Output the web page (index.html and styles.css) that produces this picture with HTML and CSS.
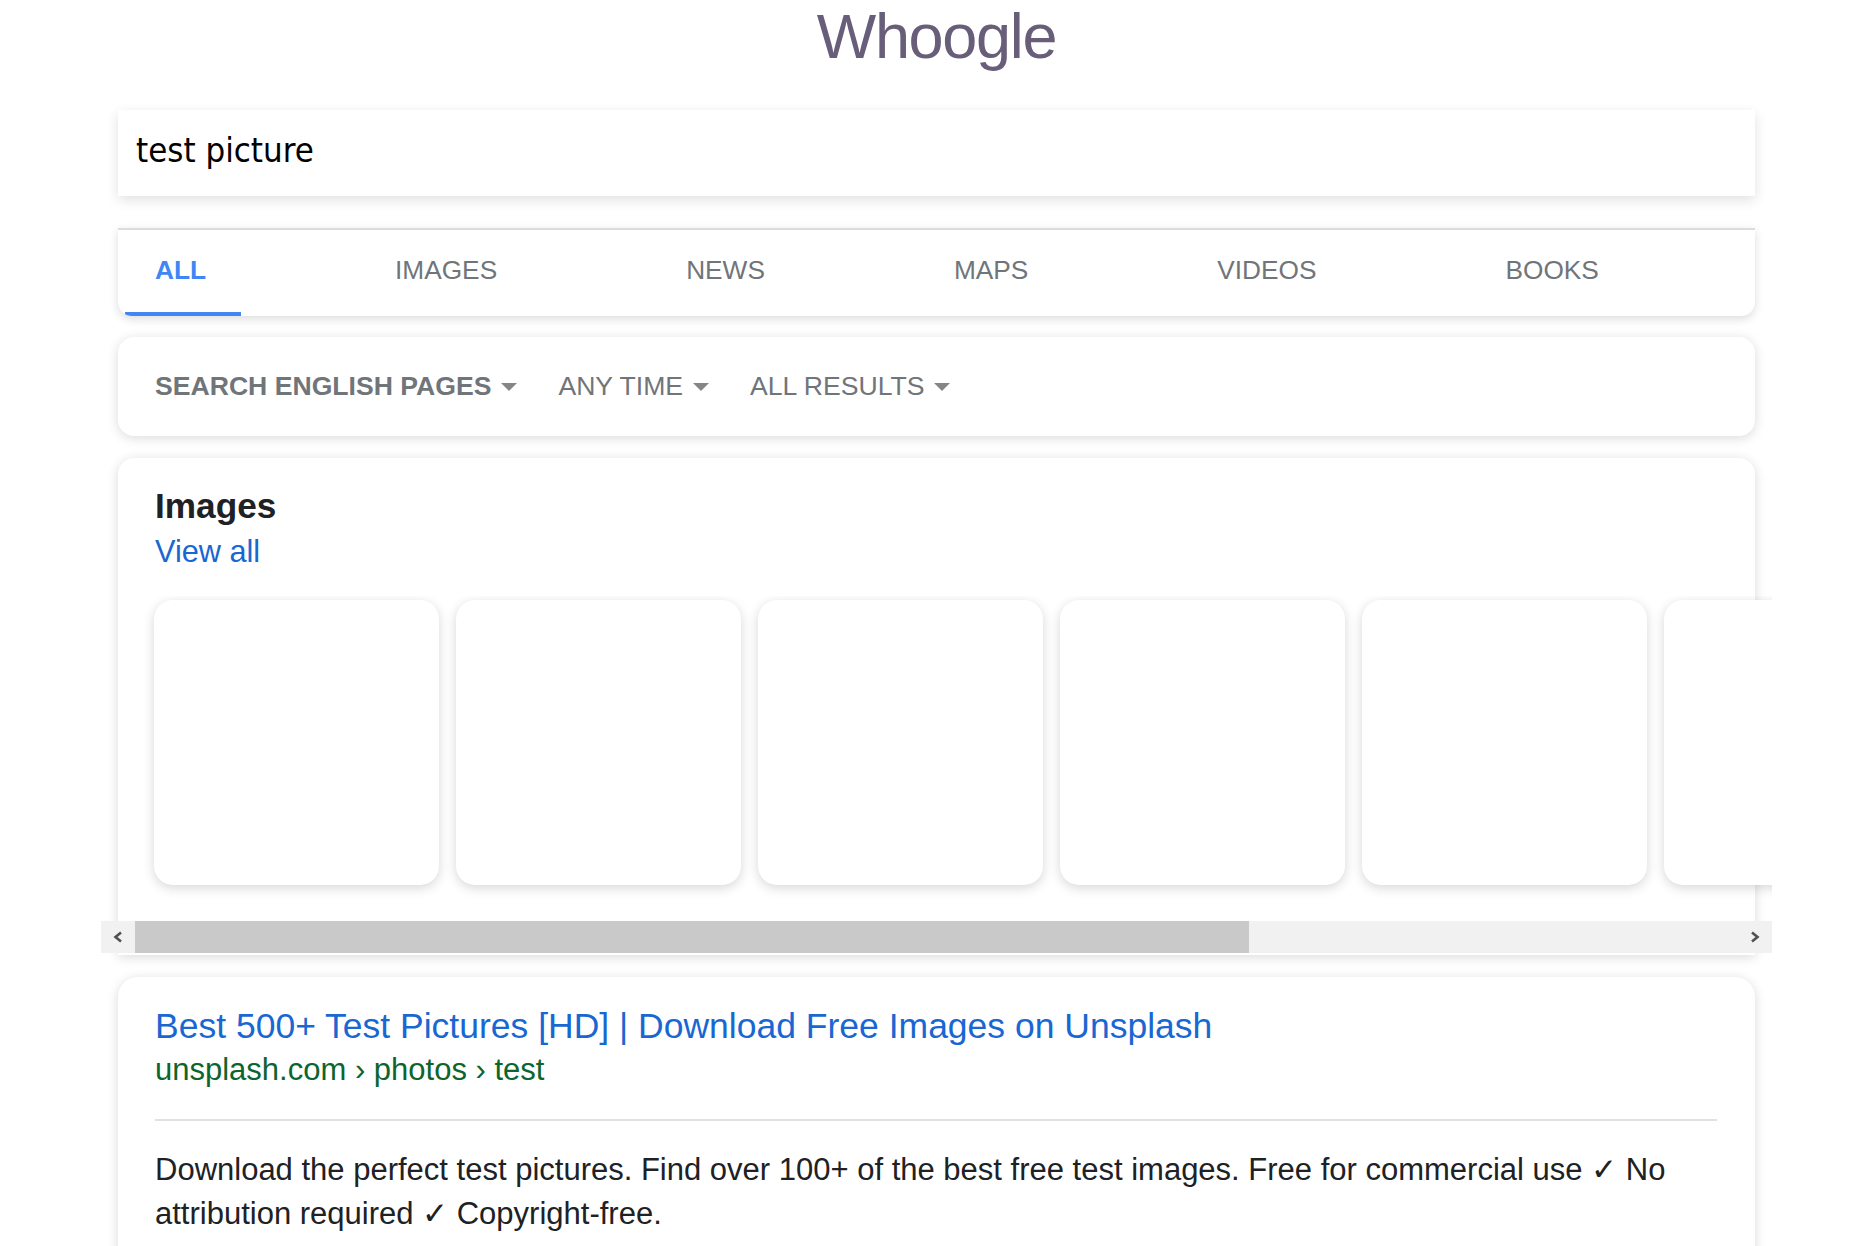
FILE: index.html
```html
<!DOCTYPE html>
<html lang="en">
<head>
<meta charset="utf-8">
<title>test picture - Whoogle Search</title>
<link rel="stylesheet" href="styles.css">
</head>
<body>
<div class="page">
  <header class="logo">Whoogle</header>

  <div class="search-bar">test picture</div>

  <nav class="tabs">
    <a class="tab active">ALL</a>
    <a class="tab first-after">IMAGES</a>
    <a class="tab">NEWS</a>
    <a class="tab">MAPS</a>
    <a class="tab">VIDEOS</a>
    <a class="tab">BOOKS</a>
  </nav>

  <div class="card filters">
    <div class="filter strong"><span>SEARCH ENGLISH PAGES</span><span class="caret"></span></div>
    <div class="filter"><span>ANY TIME</span><span class="caret"></span></div>
    <div class="filter"><span>ALL RESULTS</span><span class="caret"></span></div>
  </div>

  <section class="card images-card">
    <h2 class="images-title">Images</h2>
    <a class="view-all">View all</a>
    <div class="scroller">
      <div class="strip">
        <div class="thumb"></div>
        <div class="thumb"></div>
        <div class="thumb"></div>
        <div class="thumb"></div>
        <div class="thumb"></div>
        <div class="thumb"></div>
        <div class="thumb"></div>
      </div>
      <div class="scrollbar">
        <div class="sb-btn">
          <svg width="10" height="12" viewBox="0 0 10 12"><polyline points="8,1.5 2.5,6 8,10.5" fill="none" stroke="#505050" stroke-width="2.6"/></svg>
        </div>
        <div class="sb-track"><div class="sb-thumb"></div></div>
        <div class="sb-btn">
          <svg width="10" height="12" viewBox="0 0 10 12"><polyline points="2,1.5 7.5,6 2,10.5" fill="none" stroke="#505050" stroke-width="2.6"/></svg>
        </div>
      </div>
    </div>
  </section>

  <section class="card result">
    <a class="result-title">Best 500+ Test Pictures [HD] | Download Free Images on Unsplash</a>
    <div class="result-url">unsplash.com › photos › test</div>
    <div class="divider"></div>
    <p class="snippet">Download the perfect test pictures. Find over 100+ of the best free test images. Free for commercial use ✓ No attribution required ✓ Copyright-free.</p>
  </section>
</div>
</body>
</html>
```

FILE: styles.css
```css
html {
  overflow: hidden;
  background: #ffffff;
}

body {
  margin: 0;
  font-family: "Liberation Sans", Arial, sans-serif;
  color: #202124;
  background: #ffffff;
}

.page {
  width: 1637px;
  margin-left: 118px;
  display: flex;
  flex-direction: column;
}

.logo {
  height: 72px;
  font-size: 63px;
  line-height: 72px;
  letter-spacing: -1.3px;
  text-align: center;
  color: #685e79;
}

.search-bar {
  margin-top: 38px;
  height: 86px;
  box-sizing: border-box;
  padding: 0 0 6px 18px;
  display: flex;
  align-items: center;
  background: #ffffff;
  font-family: "DejaVu Sans", "Liberation Sans", sans-serif;
  font-stretch: condensed;
  font-size: 34.5px;
  color: #000000;
  box-shadow: 0 4px 12px rgba(0, 0, 0, 0.12);
}

.tabs {
  margin-top: 32px;
  display: flex;
  padding-left: 7px;
  background: #ffffff;
  border-top: 2px solid #dadce0;
  border-radius: 0 0 14px 14px;
  overflow: hidden;
  box-shadow: 0 3px 10px rgba(0, 0, 0, 0.14);
}

.tab {
  box-sizing: border-box;
  height: 86px;
  line-height: 81px;
  border-bottom: 4px solid transparent;
  font-size: 26.25px;
  color: #70757a;
  white-space: nowrap;
  margin-left: 189px;
}

.tab.active {
  margin-left: 0;
  padding: 0 35px 0 30px;
  font-weight: bold;
  color: #4285f4;
  border-bottom-color: #4285f4;
}

.tab.first-after {
  margin-left: 154px;
}

.card {
  background: #ffffff;
  border-radius: 16px;
  box-shadow: 0 2px 12px rgba(0, 0, 0, 0.15);
}

.filters {
  margin-top: 21px;
  height: 99px;
  box-sizing: border-box;
  padding-left: 37px;
  display: flex;
  align-items: center;
  gap: 41px;
  font-size: 26.6px;
  color: #70757a;
}

.filter {
  display: flex;
  align-items: center;
  white-space: nowrap;
}

.filter.strong {
  font-weight: bold;
}

.caret {
  margin-left: 10px;
  width: 0;
  height: 0;
  border-left: 8px solid transparent;
  border-right: 8px solid transparent;
  border-top: 8.5px solid #868686;
}

.images-card {
  margin-top: 22px;
  padding: 27px 0 2px 37px;
  display: flex;
  flex-direction: column;
  align-items: flex-start;
  border-radius: 16px 16px 0 0;
}

.images-title {
  margin: 0;
  font-size: 35.2px;
  line-height: 42px;
  font-weight: bold;
  color: #202124;
}

.view-all {
  margin-top: 6px;
  font-size: 30.7px;
  line-height: 37px;
  color: #1967d2;
}

.scroller {
  margin: 26px 0 0 -54px;
  width: 1671px;
  overflow: hidden;
}

.strip {
  display: flex;
  gap: 17px;
  padding: 4px 0 36px 53px;
}

.thumb {
  flex: 0 0 285px;
  height: 285px;
  background: #ffffff;
  border-radius: 19px;
  box-shadow: 0 3px 12px rgba(0, 0, 0, 0.16);
}

.scrollbar {
  height: 32px;
  display: flex;
  background: #f1f1f1;
}

.sb-btn {
  flex: 0 0 34px;
  display: flex;
  align-items: center;
  justify-content: center;
}

.sb-track {
  flex: 1;
  display: flex;
}

.sb-thumb {
  width: 1114px;
  background: #c9c9c9;
}

.result {
  margin-top: 22px;
  padding: 28px 38px 40px 37px;
  border-radius: 20px 20px 0 0;
}

.result-title {
  display: block;
  font-size: 35.5px;
  line-height: 42px;
  color: #1967d2;
  white-space: nowrap;
}

.result-url {
  margin-top: 4px;
  font-size: 31px;
  line-height: 37px;
  color: #0d652d;
}

.divider {
  margin-top: 31px;
  height: 2px;
  background: #dfe1e5;
}

.snippet {
  margin: 27px 0 0;
  font-size: 31px;
  line-height: 43.5px;
  color: #202124;
}
```
